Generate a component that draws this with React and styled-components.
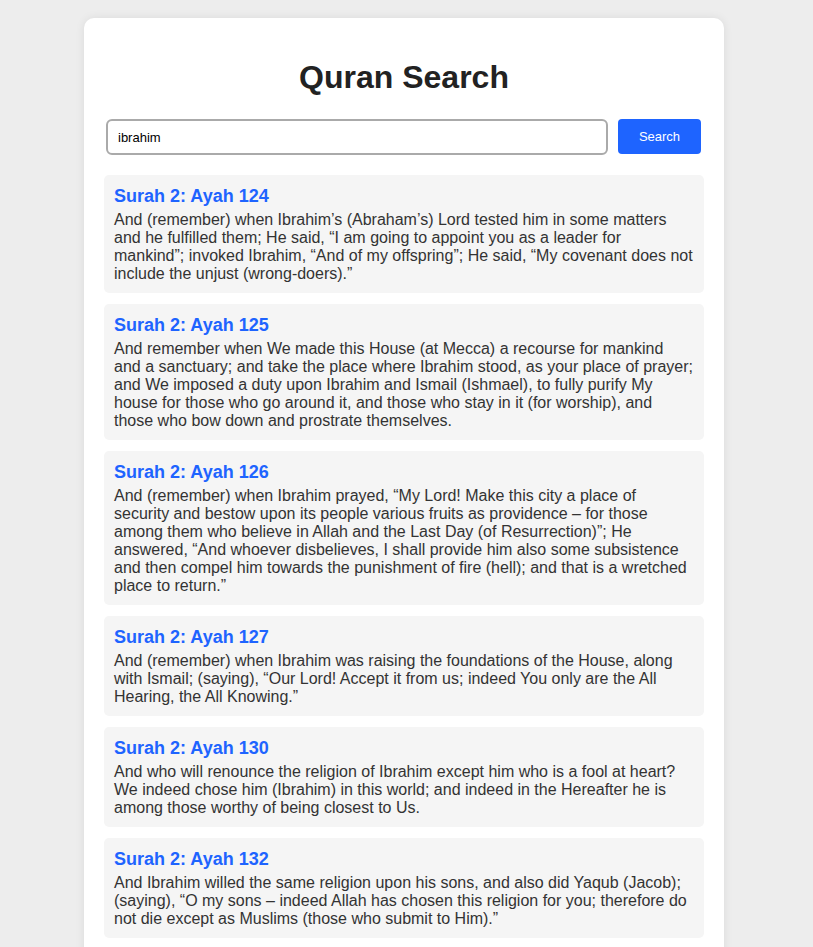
import React, { useState } from "react";
import styled, { createGlobalStyle } from "styled-components";

const Global = createGlobalStyle`
  body {
    margin: 0;
    padding-right: 5px;
    background: #ededed;
    font-family: "Liberation Sans", Arial, sans-serif;
    color: #333;
  }
`;

const Card = styled.div`
  width: 600px;
  margin: 18px auto;
  padding: 0 20px 20px;
  background: #fff;
  border-radius: 10px;
  box-shadow: 0 0 10px rgba(0, 0, 0, 0.08);
  h1 {
    margin: 0;
    padding: 41px 0 23px;
    text-align: center;
    font-size: 32px;
    line-height: 37px;
    color: #222;
  }
`;

const SearchRow = styled.div`
  display: flex;
  gap: 10px;
  margin: 0 3px 20px 2px;
`;

const Input = styled.input`
  flex: 1;
  height: 36px;
  box-sizing: border-box;
  padding: 0 10px;
  border: 2px solid #aaa;
  border-radius: 6px;
  font-family: "Liberation Sans", Arial, sans-serif;
  font-size: 13px;
  color: #000;
  outline: none;
`;

const Button = styled.button`
  width: 83px;
  height: 35px;
  border: none;
  border-radius: 4px;
  background: #1e64ff;
  color: #fff;
  font-family: "Liberation Sans", Arial, sans-serif;
  font-size: 13px;
  cursor: pointer;
`;

const Result = styled.div`
  background: #f5f5f5;
  border-radius: 5px;
  padding: 11px 10px 10px;
  margin-bottom: 11px;
  h3 {
    margin: 0 0 4px;
    font-size: 18px;
    line-height: 21px;
    color: #1e64ff;
  }
  p {
    margin: 0;
    font-size: 16px;
    line-height: 18px;
    color: #333;
  }
`;

const results = [
  {
    ref: "Surah 2: Ayah 124",
    text: "And (remember) when Ibrahim’s (Abraham’s) Lord tested him in some matters and he fulfilled them; He said, “I am going to appoint you as a leader for mankind”; invoked Ibrahim, “And of my offspring”; He said, “My covenant does not include the unjust (wrong-doers).”",
  },
  {
    ref: "Surah 2: Ayah 125",
    text: "And remember when We made this House (at Mecca) a recourse for mankind and a sanctuary; and take the place where Ibrahim stood, as your place of prayer; and We imposed a duty upon Ibrahim and Ismail (Ishmael), to fully purify My house for those who go around it, and those who stay in it (for worship), and those who bow down and prostrate themselves.",
  },
  {
    ref: "Surah 2: Ayah 126",
    text: "And (remember) when Ibrahim prayed, “My Lord! Make this city a place of security and bestow upon its people various fruits as providence – for those among them who believe in Allah and the Last Day (of Resurrection)”; He answered, “And whoever disbelieves, I shall provide him also some subsistence and then compel him towards the punishment of fire (hell); and that is a wretched place to return.”",
  },
  {
    ref: "Surah 2: Ayah 127",
    text: "And (remember) when Ibrahim was raising the foundations of the House, along with Ismail; (saying), “Our Lord! Accept it from us; indeed You only are the All Hearing, the All Knowing.”",
  },
  {
    ref: "Surah 2: Ayah 130",
    text: "And who will renounce the religion of Ibrahim except him who is a fool at heart? We indeed chose him (Ibrahim) in this world; and indeed in the Hereafter he is among those worthy of being closest to Us.",
  },
  {
    ref: "Surah 2: Ayah 132",
    text: "And Ibrahim willed the same religion upon his sons, and also did Yaqub (Jacob); (saying), “O my sons – indeed Allah has chosen this religion for you; therefore do not die except as Muslims (those who submit to Him).”",
  },
];

export default function App() {
  const [query, setQuery] = useState("ibrahim");
  return (
    <>
      <Global />
      <Card>
        <h1>Quran Search</h1>
        <SearchRow>
          <Input value={query} onChange={(e) => setQuery(e.target.value)} />
          <Button>Search</Button>
        </SearchRow>
        {results.map((r) => (
          <Result key={r.ref}>
            <h3>{r.ref}</h3>
            <p>{r.text}</p>
          </Result>
        ))}
      </Card>
    </>
  );
}
